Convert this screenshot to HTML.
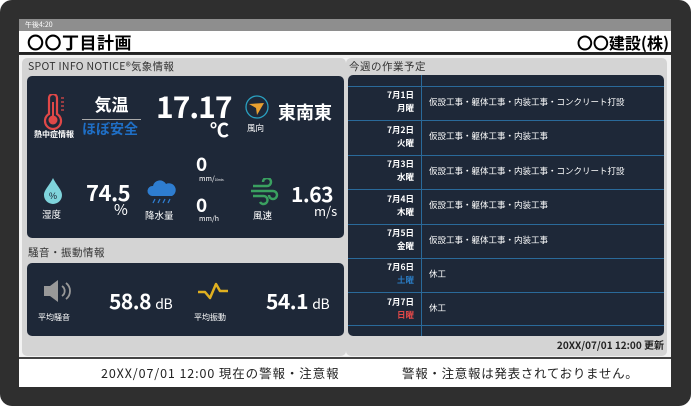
<!DOCTYPE html><html><head><meta charset="utf-8"><style>
*{margin:0;padding:0;box-sizing:border-box}
body{width:691px;height:406px;background:#fff;font-family:"Noto Sans CJK JP","Liberation Sans",sans-serif;position:relative;overflow:hidden}
.bez{position:absolute;left:0;top:0;width:691px;height:406px;background:#2f2f2f;border-radius:12px}
.a{position:absolute}
.dark{background:#1e2838;border-radius:5px}
.w{color:#fff}
.jp{font-family:"Noto Sans CJK JP",sans-serif}
</style></head><body>
<div class="bez"></div>
<div class="a jp" style="left:19px;top:19px;width:652px;height:12px;background:#8e8e8e;color:#fff;font-size:7px;line-height:12px;padding-left:6px">午後4:20</div>
<div class="a" style="left:19px;top:31px;width:652px;height:23px;background:#fff;border-bottom:2px solid #222"></div>
<div class="a jp" style="left:27px;top:30px;font-size:17px;font-weight:bold;line-height:24px;letter-spacing:0.5px">〇〇丁目計画</div>
<div class="a jp" style="right:22px;top:30px;font-size:16px;font-weight:bold;line-height:24px">〇〇建設(株)</div>
<div class="a" style="left:19px;top:55px;width:652px;height:304px;background:#f2f2f2"></div>
<div class="a" style="left:22px;top:58px;width:324px;height:298px;background:#d4d4d4;border-radius:5px"></div>
<div class="a" style="left:346px;top:58px;width:321px;height:298px;background:#d4d4d4;border-radius:5px"></div>
<div class="a jp" style="left:28px;top:59px;font-size:10.5px;color:#333;line-height:16px;letter-spacing:0.3px">SPOT INFO NOTICE®気象情報</div>
<div class="a jp" style="left:349px;top:59px;font-size:10.5px;color:#333;line-height:16px;letter-spacing:0.5px">今週の作業予定</div>
<div class="a jp" style="left:28px;top:245px;font-size:10.5px;color:#333;line-height:16px;letter-spacing:0.5px">騒音・振動情報</div>
<div class="a dark" style="left:27px;top:76px;width:317px;height:162px"></div>
<div class="a dark" style="left:27px;top:263px;width:317px;height:73px"></div>
<svg class="a" style="left:40px;top:94px" width="30" height="36"><path d="M9 4a4 4 0 0 1 8 0v16a8 8 0 1 1-8 0z" fill="none" stroke="#e04848" stroke-width="2.2"/><circle cx="13" cy="26" r="4.5" fill="#e04848"/><rect x="12" y="8" width="2" height="16" fill="#e04848"/><path d="M21 4h3M21 8h3M21 12h3M21 16h3" stroke="#e04848" stroke-width="1.2"/></svg>
<div class="a w jp" style="left:34px;top:129px;font-size:8px;font-weight:bold">熱中症情報</div>
<div class="a w jp" style="left:82px;top:93px;width:59px;text-align:center;font-size:17px;font-weight:bold;line-height:22px">気温</div>
<div class="a" style="left:82px;top:119px;width:59px;height:1px;background:#aaa"></div>
<div class="a jp" style="left:82px;top:119px;font-size:14px;font-weight:bold;color:#1f6fc6;line-height:20px">ほぼ安全</div>
<div class="a w jp" style="left:156px;top:83px;font-size:30px;font-weight:bold;line-height:44px;letter-spacing:-1px">17.17</div>
<div class="a w jp" style="left:210px;top:116px;font-size:19px;font-weight:bold">℃</div>
<svg class="a" style="left:245px;top:95px" width="24" height="24"><circle cx="12" cy="12" r="11" fill="none" stroke="#2aa0c0" stroke-width="1.3"/><path d="M4 9l15-1-7 12-1-7z" fill="#e8a030"/></svg>
<div class="a w jp" style="left:247px;top:122px;font-size:8.5px">風向</div>
<div class="a w jp" style="left:278px;top:99px;font-size:18px;font-weight:bold">東南東</div>
<svg class="a" style="left:41px;top:176px" width="24" height="28"><path d="M12 2C8 10 3 14 3 19a9 9 0 0 0 18 0c0-5-5-9-9-17z" fill="#7fd4dc"/><text x="12" y="23" font-size="9" text-anchor="middle" fill="#1e2838" font-family="Liberation Sans">%</text></svg>
<div class="a w jp" style="left:42px;top:207px;font-size:9.5px">湿度</div>
<div class="a w jp" style="left:86px;top:176px;font-size:22px;font-weight:bold;letter-spacing:-0.5px">74.5</div>
<div class="a w jp" style="left:114px;top:199px;font-size:15px">%</div>
<svg class="a" style="left:146px;top:178px" width="32" height="28"><path d="M6 18a5 5 0 0 1 1-10 7 7 0 0 1 13-2 6 6 0 0 1 6 12z" fill="#2e7dd0"/><path d="M9 21l-2 4M14 21l-2 4M19 21l-2 4M24 21l-2 4" stroke="#2e7dd0" stroke-width="1.3"/></svg>
<div class="a w jp" style="left:145px;top:208px;font-size:9.5px">降水量</div>
<div class="a w jp" style="left:196px;top:150px;font-size:19px;font-weight:bold">0</div>
<div class="a w jp" style="left:199px;top:174px;font-size:7px">mm/<span style="font-size:3px">10min.</span></div>
<div class="a w jp" style="left:196px;top:191px;font-size:19px;font-weight:bold">0</div>
<div class="a w jp" style="left:199px;top:214px;font-size:7px">mm/h</div>
<svg class="a" style="left:249px;top:178px" width="30" height="28"><path d="M4 8h14a4 4 0 1 0-4-4M2 13h22a4 4 0 1 1-4 4M4 18h10a4 4 0 1 1-3 6" fill="none" stroke="#3aa060" stroke-width="2.5"/></svg>
<div class="a w jp" style="left:253px;top:208px;font-size:9.5px">風速</div>
<div class="a w jp" style="left:291px;top:179px;font-size:21px;font-weight:bold;letter-spacing:-0.5px">1.63</div>
<div class="a w jp" style="left:314px;top:201px;font-size:13px">m/s</div>
<svg class="a" style="left:42px;top:278px" width="32" height="26"><path d="M2 8h6l8-6v22l-8-6H2z" fill="#999"/><path d="M20 8a6 6 0 0 1 0 10M24 5a10 10 0 0 1 0 16" fill="none" stroke="#999" stroke-width="1.8"/></svg>
<div class="a w jp" style="left:38px;top:312px;font-size:8px">平均騒音</div>
<div class="a w jp" style="left:109px;top:286px;font-size:21px;font-weight:bold;letter-spacing:-0.5px">58.8 <span style="font-size:14px;font-weight:normal">dB</span></div>
<svg class="a" style="left:196px;top:280px" width="36" height="20"><path d="M2 12h7l5 6 6-14 4 7h8" fill="none" stroke="#e0b020" stroke-width="2.5" stroke-linejoin="round"/></svg>
<div class="a w jp" style="left:194px;top:312px;font-size:8px">平均振動</div>
<div class="a w jp" style="left:266px;top:286px;font-size:21px;font-weight:bold;letter-spacing:-0.5px">54.1 <span style="font-size:14px;font-weight:normal">dB</span></div>
<div class="a dark" style="left:348px;top:75px;width:316px;height:261px"></div>
<div class="a" style="left:421px;top:75px;width:1px;height:261px;background:#2a6a9a"></div>
<div class="a" style="left:348px;top:86px;width:316px;height:240px;border-top:1px solid #2a6a9a;border-bottom:1px solid #2a6a9a"></div>
<div class="a" style="left:348px;top:120px;width:316px;height:1px;background:#2a6a9a"></div>
<div class="a" style="left:348px;top:155px;width:316px;height:1px;background:#2a6a9a"></div>
<div class="a" style="left:348px;top:189px;width:316px;height:1px;background:#2a6a9a"></div>
<div class="a" style="left:348px;top:224px;width:316px;height:1px;background:#2a6a9a"></div>
<div class="a" style="left:348px;top:258px;width:316px;height:1px;background:#2a6a9a"></div>
<div class="a" style="left:348px;top:292px;width:316px;height:1px;background:#2a6a9a"></div>
<div class="a w jp" style="left:360px;top:89px;width:54px;text-align:right;font-size:8.5px;font-weight:bold;line-height:13px">7月1日<br>月曜</div>
<div class="a w jp" style="left:360px;top:124px;width:54px;text-align:right;font-size:8.5px;font-weight:bold;line-height:13px">7月2日<br>火曜</div>
<div class="a w jp" style="left:360px;top:158px;width:54px;text-align:right;font-size:8.5px;font-weight:bold;line-height:13px">7月3日<br>水曜</div>
<div class="a w jp" style="left:360px;top:193px;width:54px;text-align:right;font-size:8.5px;font-weight:bold;line-height:13px">7月4日<br>木曜</div>
<div class="a w jp" style="left:360px;top:227px;width:54px;text-align:right;font-size:8.5px;font-weight:bold;line-height:13px">7月5日<br>金曜</div>
<div class="a w jp" style="left:360px;top:261px;width:54px;text-align:right;font-size:8.5px;font-weight:bold;line-height:13px">7月6日<br><span style="color:#2a7ac0">土曜</span></div>
<div class="a w jp" style="left:360px;top:296px;width:54px;text-align:right;font-size:8.5px;font-weight:bold;line-height:13px">7月7日<br><span style="color:#e04848">日曜</span></div>
<div class="a w jp" style="left:429px;top:96px;font-size:8.5px">仮設工事・躯体工事・内装工事・コンクリート打設</div>
<div class="a w jp" style="left:429px;top:130px;font-size:8.5px">仮設工事・躯体工事・内装工事</div>
<div class="a w jp" style="left:429px;top:165px;font-size:8.5px">仮設工事・躯体工事・内装工事・コンクリート打設</div>
<div class="a w jp" style="left:429px;top:199px;font-size:8.5px">仮設工事・躯体工事・内装工事</div>
<div class="a w jp" style="left:429px;top:234px;font-size:8.5px">仮設工事・躯体工事・内装工事</div>
<div class="a w jp" style="left:429px;top:268px;font-size:8.5px">休工</div>
<div class="a w jp" style="left:429px;top:302px;font-size:8.5px">休工</div>
<div class="a jp" style="right:27px;top:337px;font-size:10px;font-weight:bold;color:#222">20XX/07/01 12:00 更新</div>
<div class="a" style="left:19px;top:357px;width:652px;height:2px;background:#444"></div>
<div class="a" style="left:19px;top:359px;width:652px;height:28px;background:#fff"></div>
<div class="a jp" style="left:101px;top:363px;font-size:12.5px;color:#222;letter-spacing:0.9px">20XX/07/01 12:00 現在の警報・注意報</div>
<div class="a jp" style="left:402px;top:363px;font-size:12.5px;color:#222;letter-spacing:0.7px">警報・注意報は発表されておりません。</div>
</body></html>
